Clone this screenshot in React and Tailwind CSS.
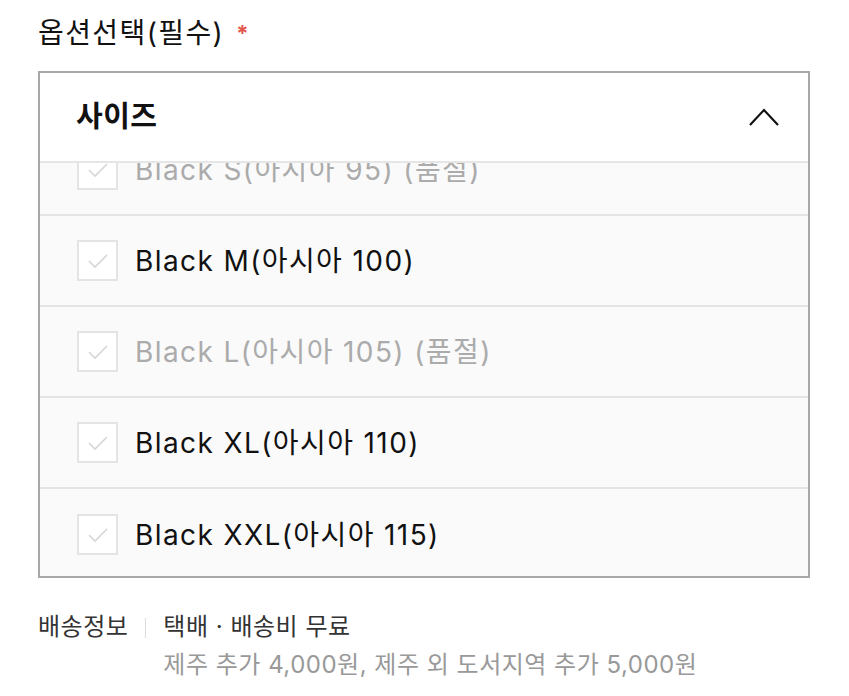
const FONT = { fontFamily: 'Inter, "Noto Sans CJK KR", sans-serif' };

const OPTIONS = [
  { label: 'Black S(아시아 95) (품절)', soldOut: true },
  { label: 'Black M(아시아 100)', soldOut: false },
  { label: 'Black L(아시아 105) (품절)', soldOut: true },
  { label: 'Black XL(아시아 110)', soldOut: false },
  { label: 'Black XXL(아시아 115)', soldOut: false },
];

function CheckBox() {
  return (
    <span className="flex h-[41px] w-[41px] shrink-0 items-center justify-center border-2 border-[#e4e4e4] bg-white">
      <svg width="22" height="16" viewBox="0 0 22 16" fill="none">
        <polyline points="2,8 8,14 20,2" stroke="#d6d6d6" strokeWidth="1.6" />
      </svg>
    </span>
  );
}

export default function App() {
  return (
    <div className="min-h-[696px] w-[849px] bg-white px-[38px] pt-[11px]" style={FONT}>
      <div className="flex items-center gap-[12px] text-[28px] leading-[44px] text-[#111]">
        <span className="tracking-[1.4px]">옵션선택(필수)</span>
        <span className="text-[22px] font-bold text-[#e2564b]">*</span>
      </div>

      <div className="mt-[16px] w-[772px] border-2 border-[#a8a8a8]">
        <div className="flex h-[90px] items-center justify-between border-b-2 border-[#e6e6e6] bg-white pl-[36px] pr-[28px]">
          <span className="text-[29px] font-bold tracking-[0.5px] text-[#111]">사이즈</span>
          <svg width="32" height="20" viewBox="0 0 32 20" fill="none">
            <polyline points="2,18 16,3 30,18" stroke="#111" strokeWidth="2.2" />
          </svg>
        </div>

        {/* list is scrolled down a little, first row is cut */}
        <div className="h-[413px] overflow-hidden bg-[#fafafa]">
          <ul className="-mt-[38px]">
            {OPTIONS.map((o, i) => (
              <li
                key={o.label}
                className={`flex h-[91px] items-center gap-[17px] pl-[37px] ${
                  i < OPTIONS.length - 1 ? 'border-b-2 border-[#e4e4e4]' : ''
                }`}
              >
                <CheckBox />
                <span className={`text-[28px] tracking-[1.4px] ${o.soldOut ? 'text-[#ababab]' : 'text-[#111]'}`}>
                  {o.label}
                </span>
              </li>
            ))}
          </ul>
        </div>
      </div>

      <div className="mt-[30px] flex text-[24px] leading-[38px] tracking-[0.5px]">
        <span className="text-[#333]">배송정보</span>
        <span className="mx-[17px] mt-[10px] h-[20px] w-px bg-[#dcdcdc]" />
        <div>
          <p className="text-[#333]">택배 · 배송비 무료</p>
          <p className="text-[#999]">제주 추가 4,000원, 제주 외 도서지역 추가 5,000원</p>
        </div>
      </div>
    </div>
  );
}
